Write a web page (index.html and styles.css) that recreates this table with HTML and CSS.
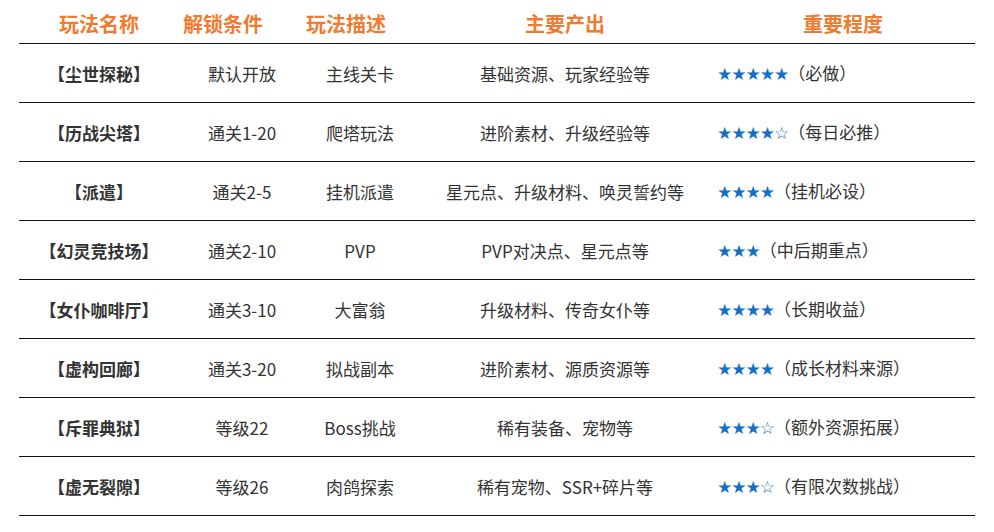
FILE: index.html
```html
<!DOCTYPE html>
<html lang="zh-CN">
<head>
<meta charset="utf-8">
<title>玩法一览</title>
<link rel="stylesheet" href="styles.css">
</head>
<body>
<div class="table">
  <div class="head">
    <div class="h">玩法名称</div>
    <div class="h">解锁条件</div>
    <div class="h">玩法描述</div>
    <div class="h">主要产出</div>
    <div class="h h5">重要程度</div>
  </div>
  <div class="row">
    <div class="c name">【尘世探秘】</div>
    <div class="c">默认开放</div>
    <div class="c">主线关卡</div>
    <div class="c">基础资源、玩家经验等</div>
    <div class="c rate"><span class="stars">★★★★★</span>（必做）</div>
  </div>
  <div class="row">
    <div class="c name">【历战尖塔】</div>
    <div class="c">通关1-20</div>
    <div class="c">爬塔玩法</div>
    <div class="c">进阶素材、升级经验等</div>
    <div class="c rate"><span class="stars">★★★★☆</span>（每日必推）</div>
  </div>
  <div class="row">
    <div class="c name">【派遣】</div>
    <div class="c">通关2-5</div>
    <div class="c">挂机派遣</div>
    <div class="c">星元点、升级材料、唤灵誓约等</div>
    <div class="c rate"><span class="stars">★★★★</span>（挂机必设）</div>
  </div>
  <div class="row">
    <div class="c name">【幻灵竞技场】</div>
    <div class="c">通关2-10</div>
    <div class="c">PVP</div>
    <div class="c">PVP对决点、星元点等</div>
    <div class="c rate"><span class="stars">★★★</span>（中后期重点）</div>
  </div>
  <div class="row">
    <div class="c name">【女仆咖啡厅】</div>
    <div class="c">通关3-10</div>
    <div class="c">大富翁</div>
    <div class="c">升级材料、传奇女仆等</div>
    <div class="c rate"><span class="stars">★★★★</span>（长期收益）</div>
  </div>
  <div class="row">
    <div class="c name">【虚构回廊】</div>
    <div class="c">通关3-20</div>
    <div class="c">拟战副本</div>
    <div class="c">进阶素材、源质资源等</div>
    <div class="c rate"><span class="stars">★★★★</span>（成长材料来源）</div>
  </div>
  <div class="row">
    <div class="c name">【斥罪典狱】</div>
    <div class="c">等级22</div>
    <div class="c">Boss挑战</div>
    <div class="c">稀有装备、宠物等</div>
    <div class="c rate"><span class="stars">★★★☆</span>（额外资源拓展）</div>
  </div>
  <div class="row">
    <div class="c name">【虚无裂隙】</div>
    <div class="c">等级26</div>
    <div class="c">肉鸽探索</div>
    <div class="c">稀有宠物、SSR+碎片等</div>
    <div class="c rate"><span class="stars">★★★☆</span>（有限次数挑战）</div>
  </div>
</div>
</body>
</html>
```
FILE: styles.css
```css
html, body {
  margin: 0;
  padding: 0;
  background: #ffffff;
}
body {
  font-family: "Noto Sans CJK SC", "Noto Sans", sans-serif;
  color: #333333;
}
.table {
  margin-left: 19px;
  width: 956px;
}
.head {
  display: grid;
  grid-template-columns: 160px 88px 158px 280px 270px;
  height: 44px;
  padding-top: 4px;
  box-sizing: border-box;
  align-items: center;
  border-bottom: 1px solid #111111;
}
.h {
  text-align: center;
  font-size: 20px;
  font-weight: 700;
  color: #f07b2f;
  line-height: 1;
}
.h5 {
  padding-left: 6px;
}
.row {
  display: grid;
  grid-template-columns: 160px 126px 110px 300px 260px;
  height: 59px;
  box-sizing: border-box;
  align-items: center;
  border-bottom: 1px solid #111111;
}
.c {
  text-align: center;
  font-size: 17px;
  line-height: 1;
  white-space: nowrap;
}
.name {
  font-weight: 700;
}
.rate {
  text-align: left;
  padding-left: 2px;
}
.stars {
  font-family: "DejaVu Sans", sans-serif;
  color: #1470c4;
  font-size: 17px;
  letter-spacing: -1px;
}
```
